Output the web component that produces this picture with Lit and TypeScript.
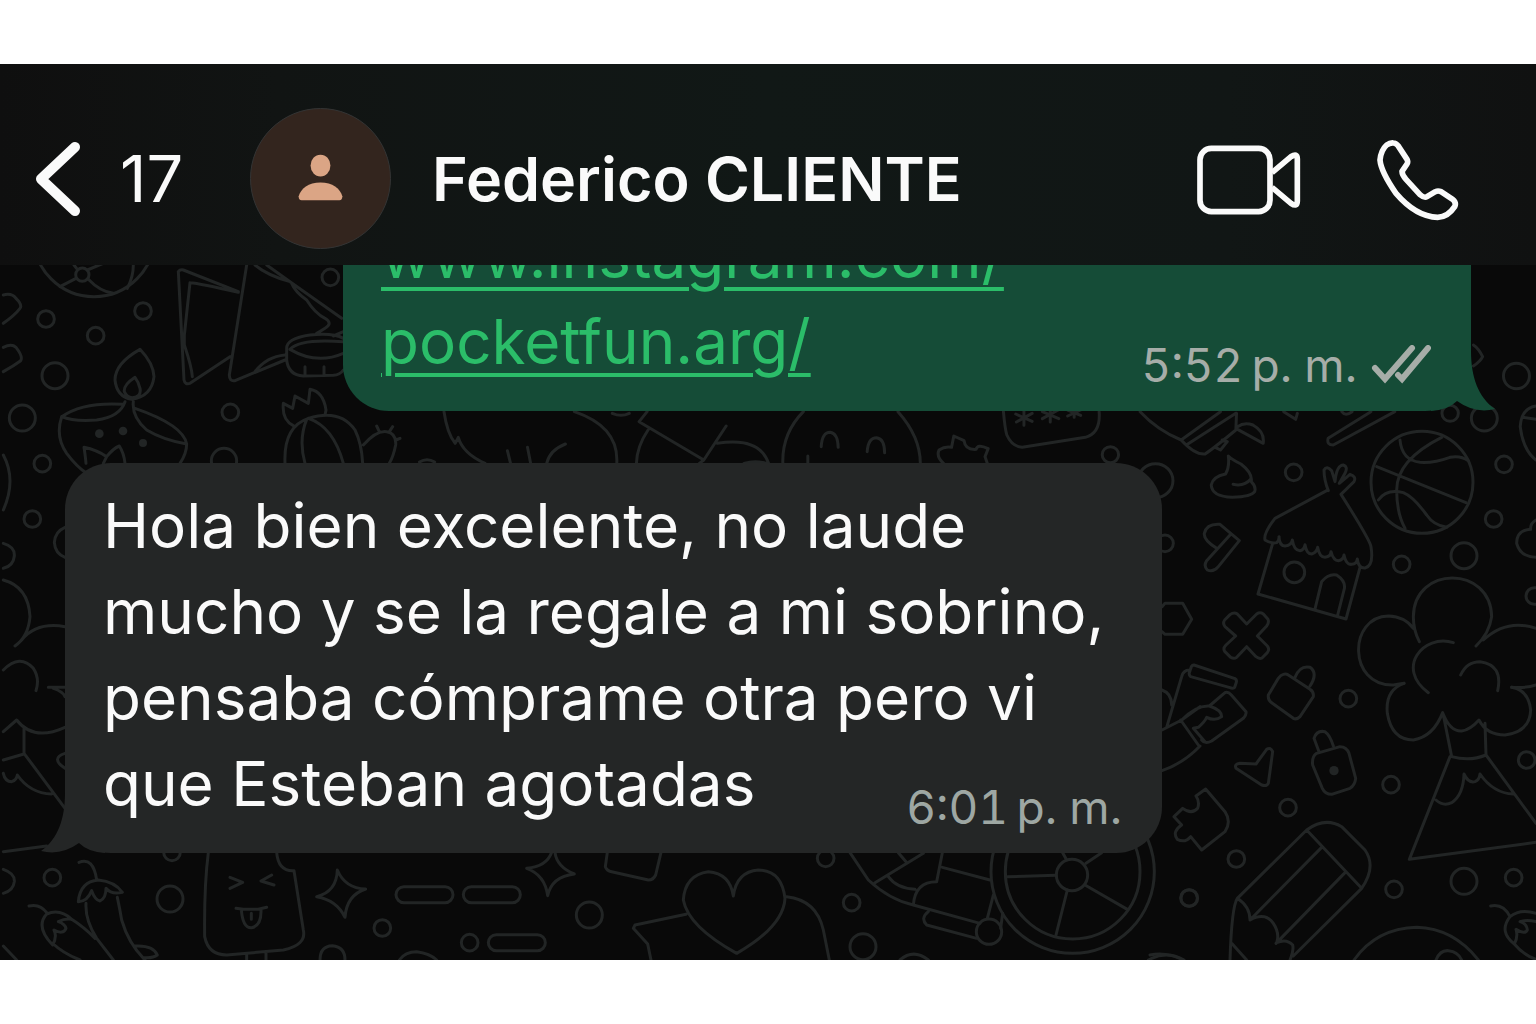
import { LitElement, html, css, svg } from "lit";
import { customElement, property } from "lit/decorators.js";

interface Sketch {
  origin: [number, number];
  scale: [number, number];
  paths: string;
  rings?: [number, number, number][];
  dots?: [number, number, number][];
}

const T = 1 / 3;

/* Wallpaper doodles, grouped by the area of the canvas they fill. */
const SKETCHES: Sketch[] = [
  {
    origin: [0, 260],
    scale: [T, T],
    paths: `M180 80L228 55 M265 58Q300 95 340 100 M262 30L310 10 M232 28L222 15 M400 15Q400 50 382 85
      M10 105Q35 98 48 115Q68 135 60 145Q45 165 10 190 M10 262Q35 250 48 262Q70 290 62 302Q40 318 10 335
      M535 35Q540 28 550 30L715 95 M740 15L688 345Q688 365 705 362L855 300
      M535 35L552 360Q555 375 570 370L690 290 M570 68Q600 70 715 97 M570 68L553 225L553 255Q575 320 577 350
      M765 15Q800 45 870 65L1025 175 M800 15L870 65 M875 70Q885 95 920 120Q945 160 975 175Q1000 190 975 205Q960 215 950 220
      M765 335Q800 290 855 285
      M860 265Q860 235 930 225Q1000 218 1030 235 M870 268Q950 315 1030 280 M870 268Q900 235 1030 245
      M860 265V300Q865 345 910 348L1000 346Q1020 345 1030 330 M915 320V345 M972 320V345 M1000 228L1030 215
      M420 268Q345 310 345 360Q350 410 395 418Q455 410 462 350Q460 310 420 268Z
      M405 352Q370 375 373 395Q380 412 397 413Q425 410 420 385Q415 365 405 352Z
      M185 470Q250 425 370 433 M185 470Q220 485 290 480Q360 470 375 425
      M400 425Q395 470 440 510Q490 540 560 552 M405 445Q550 495 560 552Q560 580 540 610
      M185 470Q165 530 200 580Q230 620 260 640
      M258 610Q255 580 252 562Q290 570 320 590Q340 565 358 558Q372 580 375 610 M320 590L310 610
      M880 497Q845 480 850 430L878 445L885 408L925 430L930 388Q970 395 978 450L975 465
      M855 610Q850 500 925 475Q1020 445 1065 510Q1085 550 1088 610 M920 478Q895 540 915 610
      M925 475Q1000 500 1030 610
      M1090 555Q1130 510 1160 515Q1190 520 1187 555Q1180 590 1168 610 M1130 498L1138 515 M1178 500L1168 515 M1200 535L1188 540`,
    rings: [
      [282, -72, 182], [247, 44, 20], [138, 177, 25], [287, 227, 25], [429, 153, 25], [165, 347, 39],
      [67, 474, 39], [127, 611, 25], [691, 457, 25], [672, 603, 38], [991, 52, 25],
    ],
    dots: [[298, 521, 13], [369, 513, 13], [429, 549, 12]],
  },
  {
    origin: [340, 250],
    scale: [0.4464, T],
    paths: `M233 485Q240 550 258 580L265 562Q275 610 325 640 M375 602L382 640 M420 592L427 640
      M505 582Q470 600 463 640 M525 485Q625 530 620 640 M610 490Q630 502 648 490
      M688 485L670 515L815 630L865 528 M690 540Q665 590 664 640 M845 580Q940 560 960 640 M815 630L805 640
      M905 640Q930 630 955 640 M1038 485Q990 550 992 640 M1250 485Q1300 560 1300 640
      M1078 590Q1080 547 1098 547Q1115 550 1116 592 M1181 605Q1183 563 1202 563Q1220 566 1220 608 M1048 618V640
      M1352 640Q1335 620 1342 600Q1355 588 1370 592L1375 558L1398 572Q1400 600 1425 598Q1428 580 1452 596L1445 620L1450 640
      M178 636Q195 622 212 636`,
  },
  {
    origin: [1000, 330],
    scale: [0.3418, T],
    paths: `M10 245Q15 300 20 315Q35 350 65 352L250 322Q295 310 290 245
      M70 240V286 M46 252L94 274 M94 250L48 276 M147 232V276 M124 245L172 266 M170 240L124 266
      M217 240V262 M198 240L236 256 M236 240L198 258
      M410 245Q460 300 530 330Q570 375 600 372Q625 355 690 300L692 250 M530 330L645 245 M545 345L690 250
      M695 290Q715 275 740 285Q775 305 770 340L695 298 M630 352L645 360L665 335L650 330
      M830 245L865 268L870 250 M1000 245Q1010 260 1030 245
      M1085 245L960 325Q955 345 975 345L1155 245 M1385 45Q1400 55 1412 80Q1405 95 1385 108
      M1568 228Q1525 235 1522 290Q1530 360 1568 390 M1530 262L1568 268
      M668 378Q680 390 705 402Q740 430 735 455Q750 470 745 485Q735 500 680 502Q620 500 618 465Q622 440 660 432Q672 410 668 378Z
      M682 463Q715 470 733 448`,
    rings: [[1317, 250, 24], [1417, 265, 38], [323, 374, 24], [1511, 138, 38], [455, 452, 51]],
  },
  {
    origin: [1150, 440],
    scale: [T, T],
    paths: `M680 80L948 188 M875 -8Q740 60 740 150Q740 220 765 265 M750 0Q755 60 810 67Q850 70 900 52Q930 45 955 62
      M685 180Q710 145 760 158Q790 170 830 225Q850 255 890 262
      M200 325Q160 300 163 280Q170 250 210 253L268 302L205 380Q190 398 172 390Q160 378 170 362L240 285
      M535 152Q522 120 522 90Q530 75 545 92L555 125Q560 75 580 75Q595 80 585 100L568 130L600 103Q620 110 612 125L573 163
      M530 152L375 235Q340 280 345 300Q365 312 380 308Q388 300 387 290Q388 318 405 318Q425 316 427 300Q432 332 450 332Q462 330 465 314Q470 342 485 342Q500 338 503 322Q508 352 525 352Q542 350 543 335Q550 362 565 362Q580 360 582 345Q588 375 605 373Q620 372 622 357Q625 385 645 384Q672 378 663 320Q660 300 573 163
      M368 310L324 462L588 537L630 382 M495 507L515 425Q535 400 560 405Q590 425 582 450L563 525
      M36 500L45 490H98L125 538L98 583H45L36 575
      M290 552L320 522Q330 515 340 522L354 538Q358 548 350 558L322 588L352 618Q360 628 352 638L336 654Q328 658 318 650L290 620L260 652Q252 658 242 652L224 634Q218 625 228 615L257 588L225 560Q217 550 224 540L240 524Q252 515 262 522Z
      M808 605Q790 570 790 530C792 375 1022 375 1025 530Q1018 580 978 618 M1000 600Q1070 535 1158 565
      M790 565Q765 530 715 528C595 530 592 738 730 735L762 730
      M910 608C820 580 735 685 835 758 M932 705Q950 665 990 665Q1060 675 1043 752 M1085 742Q1130 745 1158 735
      M1158 240Q1140 250 1142 268Q1100 270 1100 310Q1110 350 1158 352`,
    rings: [
      [816, 127, 153], [431, 97, 25], [1062, 73, 25], [1031, 237, 25], [942, 347, 39], [755, 373, 25],
      [1153, 468, 25], [45, 310, 25], [433, 397, 31],
    ],
  },
  {
    origin: [1150, 640],
    scale: [T, T],
    paths: `M132 75L255 116Q262 120 258 130L254 142Q248 147 240 143L122 110Q116 105 118 98L124 80Q128 74 132 75Z
      M118 90Q100 90 95 110L50 262 M36 150Q65 160 65 195
      M36 270L95 240L150 200M178 198L225 158Q234 154 244 165L288 215Q290 225 280 235L185 303Q165 313 155 300
      M92 240L145 315 M95 240Q140 195 178 198Q215 210 215 230Q195 245 170 232Q165 245 145 262L130 265L165 305 M36 392Q100 370 150 318
      M400 103Q392 105 385 115L355 165Q353 180 365 188L430 235Q440 240 450 230L490 170Q492 155 480 148L415 105Q408 100 400 103Z
      M435 112Q450 75 480 82Q505 100 480 138
      M507 335L492 295Q500 270 525 275Q540 285 550 318
      M500 340L570 320Q590 320 597 340L617 415Q615 435 600 445L545 463Q525 463 517 445L488 375Q485 350 500 340Z
      M318 372L350 328Q362 320 368 335L355 430Q350 440 335 435L258 385Q252 372 270 370Z
      M167 447L225 515Q245 545 225 575L155 630L122 590Q105 610 82 598Q65 575 95 555L72 530L98 505Q125 525 143 505Q150 485 138 468Z
      M762 130Q705 150 712 220Q725 300 790 300Q850 290 878 218Q900 275 935 273Q960 270 987 240Q1010 285 1065 285Q1140 275 1142 210Q1135 150 1085 142
      M880 225L905 350Q960 365 1008 345L1005 250 M900 350L778 658L1158 607 M1008 345L1158 550
      M858 480Q880 500 905 488Q940 465 942 402Q955 430 975 425Q988 420 990 402Q1030 460 1090 462
      M262 775L470 570Q525 530 575 560L645 630Q680 680 635 745L430 948 M470 570L635 745 M515 622L300 840 M588 695L378 910
      M262 775Q245 800 240 960 M262 775Q300 800 300 840Q345 815 370 850Q390 880 380 908Q410 895 428 915Q432 930 420 960 M245 910L290 960
      M612 960Q680 865 800 862Q910 865 985 960 M858 960Q870 930 895 932Q925 935 935 960 M0 945Q50 935 100 960
      M1022 798Q1060 790 1080 830 M1158 820Q1110 805 1080 830Q1045 875 1093 912Q1105 890 1098 868Q1125 885 1132 870Q1130 850 1110 845Q1130 838 1158 845
      M1093 912Q1120 945 1158 958`,
    rings: [
      [595, 176, 25], [723, 434, 25], [414, 503, 25], [259, 657, 25], [118, 774, 25], [732, 748, 25],
      [942, 724, 39], [1091, 713, 25], [1130, 360, 25],
    ],
    dots: [[552, 392, 14]],
  },
  {
    origin: [0, 820],
    scale: [T, T],
    paths: `M10 95L140 78 M10 148Q45 160 43 185Q40 212 10 220
      M960 420Q960 378 997 377Q1035 380 1035 420 M1198 420Q1215 395 1250 395Q1290 400 1310 420
      M237 127Q280 110 290 180 M235 245Q240 185 295 180Q345 185 367 217
      M235 245Q262 245 275 212Q285 240 300 243Q318 235 318 205Q335 225 367 217
      M258 250Q255 300 290 355L340 420 M352 232Q360 270 365 300Q385 370 435 420 M405 378Q460 375 472 405Q460 415 430 413
      M87 258Q120 250 140 278 M215 298Q180 265 140 282Q105 320 158 375Q172 350 162 330Q190 345 198 325Q195 312 175 305Q195 295 215 298
      M215 298Q250 320 285 355 M160 372Q190 400 240 420 M10 378L50 420
      M625 97Q612 200 614 350Q625 405 680 405L850 390Q920 375 910 330L882 152Q835 155 830 97
      M690 172L728 187L690 205 M815 165L783 183L822 195 M708 265L730 268H775L800 262
      M724 268Q728 325 755 323Q785 318 783 268 M754 280V298 M740 403V420 M798 400V420
      M1012 150Q1035 205 1097 207Q1040 225 1035 292Q1010 240 950 230Q1010 215 1012 150Z`,
    rings: [[157, 173, 25], [510, 237, 39], [1147, 324, 25], [516, 97, 25]],
  },
  {
    origin: [380, 820],
    scale: [T, T],
    paths: `M72 200H195A24 24 0 0 1 195 248H72A24 24 0 0 1 72 200Z M274 200H397A24 24 0 0 1 397 248H274A24 24 0 0 1 274 200Z
      M349 344H472A24 24 0 0 1 472 392H349A24 24 0 0 1 349 344Z
      M515 97Q500 140 440 145Q495 165 503 227Q515 170 583 162Q530 140 525 97
      M682 97L676 140Q680 152 695 155L805 180Q820 180 827 165L843 97
      M1060 228Q1050 160 985 155Q915 165 910 240Q925 320 1070 400Q1210 320 1215 235Q1205 150 1135 150Q1070 155 1060 228Z
      M918 283L765 315L760 325L803 372L813 420`,
    rings: [[269, 368, 25], [628, 285, 39]],
  },
  {
    origin: [780, 780],
    scale: [T, T],
    paths: `M683 290L828 286 M862 330L828 465 M915 315L1042 388 M918 250L965 218 M860 240L848 218
      M210 218L265 300Q330 360 400 375L600 430 M285 308L430 220 M355 218L378 245 M325 290Q350 325 405 328
      M400 375Q405 305 470 305L487 218 M487 262L630 300 M445 395Q420 415 440 435L590 475
      M640 345L622 415 M668 400L662 445 M20 350Q110 360 130 450L148 540
      M360 540Q400 505 445 540 M1105 540Q1160 510 1212 540`,
    rings: [
      [137, 235, 25], [215, 368, 25], [249, 500, 39], [1227, 354, 25], [627, 455, 38], [876, 285, 47],
      [878, 275, 245], [878, 275, 202],
    ],
  },
  {
    origin: [0, 440],
    scale: [T, T],
    paths: `M10 45Q50 120 10 210 M10 310Q45 320 43 348Q40 378 10 385 M195 262Q165 275 163 307Q165 340 195 352
      M10 420Q85 440 90 530Q85 590 45 618 M65 600Q110 545 195 560 M10 690Q60 640 100 685Q120 715 108 752
      M145 742H195 M160 745Q190 755 195 770 M10 875L50 840Q100 905 195 862 M72 860V940L195 1105 M10 960L72 942
      M10 1000Q15 1025 35 1025Q50 1020 52 1005Q90 1060 155 1062 M195 940Q150 955 195 985`,
    rings: [[97, 237, 25]],
  },
];

@customElement("chat-wallpaper")
export class ChatWallpaper extends LitElement {
  static styles = css`
    :host {
      display: block;
      overflow: hidden;
    }
    .art {
      display: block;
      width: 100%;
      height: 100%;
      fill: none;
      stroke: #222525;
      stroke-width: 3;
      stroke-linecap: round;
      stroke-linejoin: round;
    }
    .dot {
      fill: #222525;
      stroke: none;
    }
  `;

  render() {
    return html`<svg class="art" viewBox="0 265 1536 695" preserveAspectRatio="xMidYMin slice" aria-hidden="true">
      ${SKETCHES.map(
        (s) => svg`<g transform="translate(${s.origin[0]} ${s.origin[1]}) scale(${s.scale[0]} ${s.scale[1]})">
          <path vector-effect="non-scaling-stroke" d=${s.paths} />
          ${(s.rings ?? []).map(([x, y, r]) => svg`<circle vector-effect="non-scaling-stroke" cx=${x} cy=${y} r=${r} />`)}
          ${(s.dots ?? []).map(([x, y, r]) => svg`<circle class="dot" cx=${x} cy=${y} r=${r} />`)}
        </g>`,
      )}
    </svg>`;
  }
}

@customElement("chat-bubble")
export class ChatBubble extends LitElement {
  @property({ type: Boolean, reflect: true }) sent = false;
  @property() time = "";

  static styles = css`
    :host {
      --fill: #242626;
      --meta: #9ea7a3;
      position: relative;
      display: grid;
      flex: none;
      margin: 0 309px 0 0;
      padding: 20px 40px 18px 38px;
      border-radius: 46px;
      background: var(--fill);
      color: #fafafa;
      font-size: 62px;
      line-height: 86px;
    }
    :host([sent]) {
      --fill: #154c37;
      --meta: #a6ada8;
      margin: 0 0 0 278px;
    }
    .text {
      grid-area: 1 / 1;
      padding-bottom: 8px;
    }
    .meta {
      grid-area: 1 / 1;
      place-self: end;
      display: flex;
      align-items: center;
      gap: 14px;
      color: var(--meta);
      font-size: 46px;
      font-variant-numeric: tabular-nums;
      line-height: 56px;
    }
    .checks {
      width: 60px;
      height: 40px;
      fill: none;
      stroke: currentColor;
      stroke-width: 6;
      stroke-linecap: round;
    }
    .tail {
      position: absolute;
      bottom: 0;
      left: -24px;
      width: 64px;
      height: 64px;
      fill: var(--fill);
    }
    :host([sent]) .tail {
      left: auto;
      right: -24px;
      transform: scaleX(-1);
    }
  `;

  render() {
    return html`
      <svg class="tail" viewBox="0 0 64 64" aria-hidden="true">
        <path d="M64 4H24C24 30 17 50 0 62Q20 67 38 54Q47 63 64 64Z" />
      </svg>
      <div class="text"><slot></slot></div>
      <div class="meta">
        <time>${this.time}</time>
        ${this.sent
          ? html`<svg class="checks" viewBox="0 0 60 40" role="img" aria-label="Entregado">
              <path d="M4 23L14 34L41 3M27 30L31 34L57 3" />
            </svg>`
          : null}
      </div>
    `;
  }
}

@customElement("app-root")
export class AppRoot extends LitElement {
  static styles = css`
    :host {
      display: flex;
      flex-direction: column;
      box-sizing: border-box;
      height: 100vh;
      padding: 64px 0;
      background: #ffffff;
      font-family: Inter, "Liberation Sans", sans-serif;
    }
    .bar {
      display: flex;
      align-items: center;
      padding: 44px 76px 16px 34px;
      background: linear-gradient(90deg, #0f0f0f 0%, #111413 18%, #111816 50%, #111615 80%, #101111 100%);
      color: #fafafa;
    }
    .plain {
      display: flex;
      align-items: center;
      margin: 0;
      padding: 0;
      border: 0;
      background: none;
      color: inherit;
      font: inherit;
    }
    .back {
      gap: 38px;
      width: 216px;
      font-size: 65px;
      line-height: 80px;
    }
    .chevron {
      width: 48px;
      height: 76px;
      fill: none;
      stroke: currentColor;
      stroke-width: 10;
      stroke-linecap: round;
      stroke-linejoin: round;
    }
    .avatar {
      box-sizing: border-box;
      width: 141px;
      height: 141px;
      border: 1px solid #333434;
      border-radius: 50%;
      background: #33251e;
      fill: #dba585;
    }
    .name {
      flex: 1;
      margin: 0 0 0 41px;
      font-size: 61px;
      font-weight: 600;
      line-height: 80px;
      white-space: nowrap;
    }
    .actions {
      display: flex;
      align-items: center;
      gap: 73px;
      padding-top: 2px;
    }
    .icon {
      fill: none;
      stroke: currentColor;
      stroke-width: 17;
      stroke-linejoin: round;
    }
    .video {
      width: 108px;
      height: 76px;
    }
    .phone {
      width: 84px;
      height: 84px;
    }
    .chat {
      position: relative;
      flex: 1;
      display: flex;
      flex-direction: column;
      justify-content: flex-end;
      gap: 52px;
      min-height: 0;
      padding: 0 65px 107px;
      overflow: hidden;
      background: #090909;
    }
    .wallpaper {
      position: absolute;
      inset: 0;
    }
    .link {
      color: #2bbd69;
      text-decoration: underline;
      text-decoration-thickness: 4px;
      text-underline-offset: 9px;
    }
  `;

  render() {
    return html`
      <header class="bar">
        <button class="plain back" aria-label="Volver, 17 chats sin leer">
          <svg class="chevron" viewBox="0 0 48 76" aria-hidden="true"><path d="M41 6L7 38L41 70" /></svg>
          <span>17</span>
        </button>
        <svg class="avatar" viewBox="0 0 140 140" aria-hidden="true">
          <ellipse cx="70" cy="57" rx="10" ry="11" />
          <path d="M51 92Q48 92 48 88C50 80 58 74 70 74C82 74 90 80 92 88Q92 92 89 92Z" />
        </svg>
        <h1 class="name">Federico CLIENTE</h1>
        <div class="actions">
          <button class="plain" aria-label="Videollamada">
            <svg class="icon video" viewBox="196 126 324 228" aria-hidden="true">
              <rect x="211" y="145" width="210" height="190" rx="34" />
              <path d="M427 218L484 170Q503 157 503 177V303Q503 323 484 310L427 262" />
            </svg>
          </button>
          <button class="plain" aria-label="Llamada">
            <svg class="icon phone" viewBox="740 114 252 252" aria-hidden="true">
              <path d="M792 129Q800 129 806 137L833 178Q837 186 833 192L818 214Q818 225 830 238L872 284Q885 295 893 290L918 275Q926 271 935 275L970 298Q982 308 976 320Q955 352 925 352Q860 350 800 280Q755 215 752 180Q755 150 772 135Q782 128 792 129Z" />
            </svg>
          </button>
        </div>
      </header>
      <main class="chat">
        <chat-wallpaper class="wallpaper"></chat-wallpaper>
        <chat-bubble sent time="5:52&#8239;p. m.">
          <a class="link" href="https://www.instagram.com/pocketfun.arg/">www.instagram.com/<br />pocketfun.arg/</a>
        </chat-bubble>
        <chat-bubble time="6:01&#8239;p. m.">
          Hola bien excelente, no laude mucho y se la regale a mi sobrino, pensaba cómprame otra pero vi que Esteban agotadas
        </chat-bubble>
      </main>
    `;
  }
}
